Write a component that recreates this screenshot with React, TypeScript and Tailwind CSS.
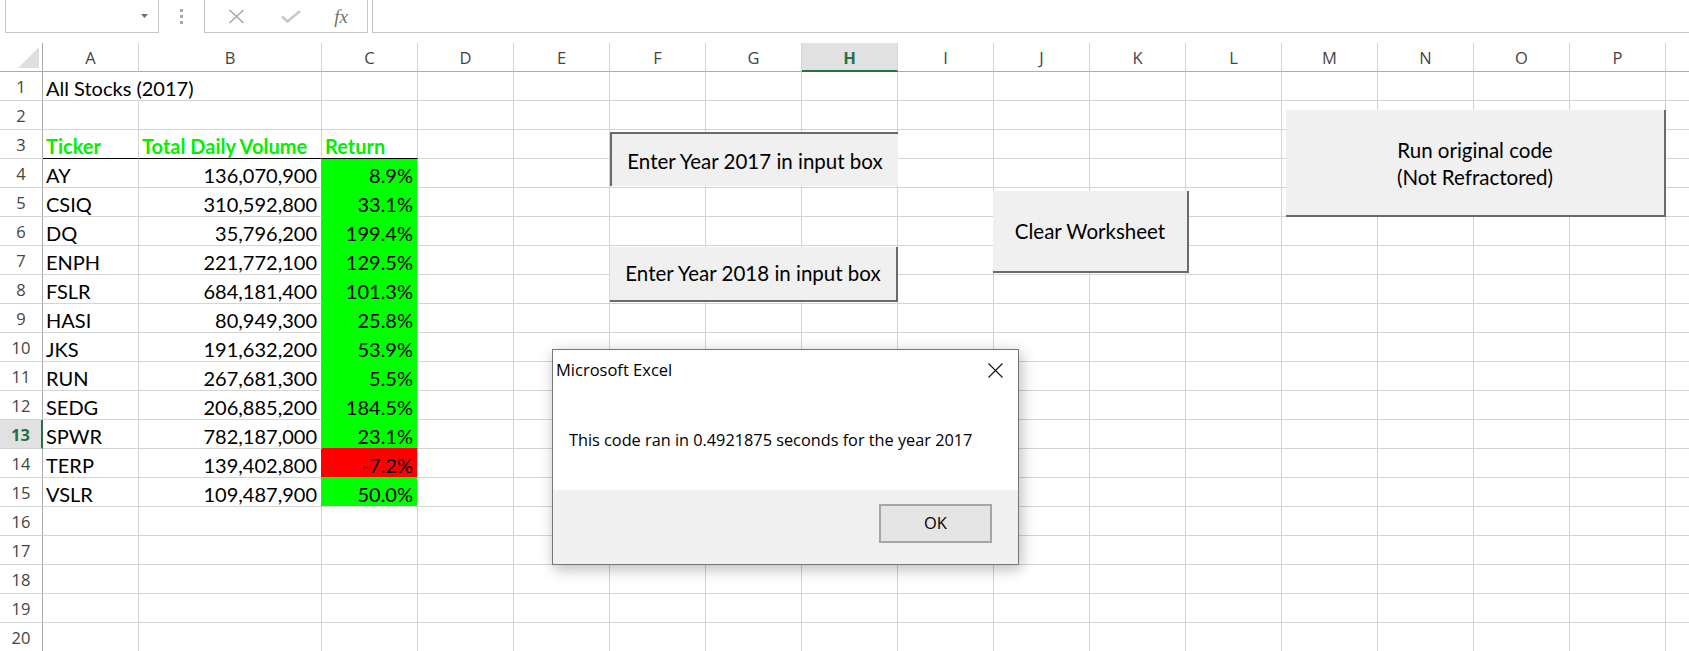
import React from "react";

const COLS = ["A", "B", "C", "D", "E", "F", "G", "H", "I", "J", "K", "L", "M", "N", "O", "P", "Q"];

type Fill = "green" | "red";
type Row = { a?: string; b?: string; c?: string; fill?: Fill };

const DATA: Record<number, Row> = {
  4: { a: "AY", b: "136,070,900", c: "8.9%", fill: "green" },
  5: { a: "CSIQ", b: "310,592,800", c: "33.1%", fill: "green" },
  6: { a: "DQ", b: "35,796,200", c: "199.4%", fill: "green" },
  7: { a: "ENPH", b: "221,772,100", c: "129.5%", fill: "green" },
  8: { a: "FSLR", b: "684,181,400", c: "101.3%", fill: "green" },
  9: { a: "HASI", b: "80,949,300", c: "25.8%", fill: "green" },
  10: { a: "JKS", b: "191,632,200", c: "53.9%", fill: "green" },
  11: { a: "RUN", b: "267,681,300", c: "5.5%", fill: "green" },
  12: { a: "SEDG", b: "206,885,200", c: "184.5%", fill: "green" },
  13: { a: "SPWR", b: "782,187,000", c: "23.1%", fill: "green" },
  14: { a: "TERP", b: "139,402,800", c: "-7.2%", fill: "red" },
  15: { a: "VSLR", b: "109,487,900", c: "50.0%", fill: "green" },
};

const ROWS = Array.from({ length: 20 }, (_, i) => i + 1);

function FormulaBar() {
  return (
    <div className="flex h-[33px] items-stretch">
      {/* Name box */}
      <div className="ml-[5px] flex w-[154px] items-center justify-end border-x border-b border-[#c6c6c6] pr-[10px]">
        <svg width="7" height="4" viewBox="0 0 7 4">
          <path d="M0 0h7L3.5 4z" fill="#6d6d6d" />
        </svg>
      </div>
      <div className="flex w-[45px] flex-col items-center justify-center gap-[3px]">
        <span className="h-[3px] w-[3px] bg-[#a8a8a8]" />
        <span className="h-[3px] w-[3px] bg-[#a8a8a8]" />
        <span className="h-[3px] w-[3px] bg-[#a8a8a8]" />
      </div>
      {/* Cancel / enter / fx */}
      <div className="flex w-[164px] items-center border-x border-b border-[#c6c6c6]">
        <div className="flex w-[62px] justify-center">
          <svg width="17" height="15" viewBox="0 0 17 15">
            <path d="M1.5 1 15.5 14M15.5 1 1.5 14" stroke="#a3a3a3" strokeWidth="1.4" fill="none" />
          </svg>
        </div>
        <div className="flex w-[48px] justify-center">
          <svg width="20" height="13" viewBox="0 0 20 13">
            <path d="M1 6.5 6.5 11.5 19 1" stroke="#c9c9c9" strokeWidth="2.6" fill="none" />
          </svg>
        </div>
        <div className="flex w-[52px] justify-center font-['Liberation_Serif',serif] text-[19px] italic leading-none text-[#707070]">
          fx
        </div>
      </div>
      <div className="ml-[4px] flex-1 border-b border-l border-[#c6c6c6]" />
    </div>
  );
}

function cellText(row: number, col: string) {
  if (row === 1 && col === "A") return "All Stocks (2017)";
  if (row === 3) {
    if (col === "A") return "Ticker";
    if (col === "B") return "Total Daily Volume";
    if (col === "C") return "Return";
  }
  const d = DATA[row];
  if (!d) return "";
  if (col === "A") return d.a ?? "";
  if (col === "B") return d.b ?? "";
  if (col === "C") return d.c ?? "";
  return "";
}

function fillColor(f?: Fill) {
  return f === "red" ? "#ff0000" : "#00ff00";
}

function Cell({ row, col }: { row: number; col: string }) {
  const text = cellText(row, col);
  const d = DATA[row];
  const next = DATA[row + 1];
  let bg: string | undefined;
  let borderR = "#d4d4d4";
  let borderB = "#d4d4d4";

  if (row === 3 && (col === "A" || col === "B" || col === "C")) borderB = "#000000";
  if (row === 1 && col === "A") borderR = "transparent";
  if (d && d.fill && col === "C") {
    bg = fillColor(d.fill);
    borderB = next && next.fill ? fillColor(next.fill) : "#d4d4d4";
  }
  if (d && d.fill && col === "B") borderR = fillColor(d.fill);

  const header = row === 3;
  const right = !header && (col === "B" || col === "C");

  return (
    <div
      className={
        "flex items-center whitespace-nowrap border-r border-b font-['Lato',sans-serif] text-[20px] " +
        (right ? "justify-end pr-[4px] " : "pl-[3px] ") +
        (header ? "font-bold text-[#00f000]" : "text-black")
      }
      style={{ backgroundColor: bg, borderRightColor: borderR, borderBottomColor: borderB }}
    >
      <span className="pt-[3px]">{text}</span>
    </div>
  );
}

export default function App() {
  return (
    <div className="relative h-[651px] w-[1689px] overflow-hidden bg-white">
      <FormulaBar />

      <div className="mt-[10px] grid auto-rows-[29px] grid-cols-[43px_96px_183px_repeat(15,96px)]">
        {/* Corner */}
        <div className="relative border-r border-b border-[#ababab]">
          <svg className="absolute left-[18px] top-[4px]" width="21" height="21" viewBox="0 0 21 21">
            <path d="M21 0V21H0z" fill="#dfdfdf" />
          </svg>
        </div>
        {/* Column headers (Q sits past the window edge, its label is not shown) */}
        {COLS.map((c) => (
          <div
            key={c}
            className={
              "flex items-center justify-center border-r border-r-[#d4d4d4] pt-[3px] font-['Open_Sans',sans-serif] text-[16.5px] " +
              (c === "H"
                ? "border-b-2 border-b-[#217346] bg-[#e1e1e1] font-bold text-[#217346]"
                : "border-b border-b-[#ababab] text-[#444444]")
            }
          >
            {c === "Q" ? "" : c}
          </div>
        ))}

        {ROWS.map((r) => (
          <React.Fragment key={r}>
            <div
              className={
                "flex items-center justify-center border-b border-b-[#d4d4d4] pt-[2px] font-['Open_Sans',sans-serif] text-[16.5px] " +
                (r === 13
                  ? "border-r-2 border-r-[#217346] bg-[#e1e1e1] font-bold text-[#217346]"
                  : "border-r border-r-[#ababab] text-[#444444]")
              }
            >
              {r}
            </div>
            {COLS.map((c) => (
              <Cell key={c} row={r} col={c} />
            ))}
          </React.Fragment>
        ))}
      </div>

      {/* Sheet buttons */}
      <div className="absolute left-[610px] top-[132px] flex h-[54px] w-[288px] items-center justify-center border-l-2 border-t-2 border-[#6a6a6a] bg-[#f0f0f0] pt-[2px] font-['Lato',sans-serif] text-[20.5px] text-black">
        Enter Year 2017 in input box
      </div>
      <div className="absolute left-[610px] top-[247px] flex h-[55px] w-[288px] items-center justify-center border-r-2 border-b-2 border-[#6a6a6a] bg-[#f0f0f0] font-['Lato',sans-serif] text-[20.5px] text-black">
        Enter Year 2018 in input box
      </div>
      <div className="absolute left-[993px] top-[191px] flex h-[82px] w-[196px] items-center justify-center border-r-2 border-b-2 border-[#6a6a6a] bg-[#f0f0f0] font-['Lato',sans-serif] text-[20.5px] text-black">
        Clear Worksheet
      </div>
      <div className="absolute left-[1286px] top-[110px] flex h-[107px] w-[380px] flex-col items-center justify-center border-r-2 border-b-2 border-[#6a6a6a] bg-[#f0f0f0] pt-[3px] text-center font-['Lato',sans-serif] text-[20.5px] leading-[26.6px] text-black">
        <span>Run original code</span>
        <span>(Not Refractored)</span>
      </div>

      {/* Message box */}
      <div className="absolute left-[552px] top-[349px] flex h-[216px] w-[467px] flex-col border border-[#767676] bg-white font-['Open_Sans',sans-serif] text-black shadow-[2px_4px_14px_rgba(0,0,0,0.28)]">
        <div className="flex h-[40px] items-center justify-between">
          <span className="pl-[3px] text-[16.5px]">Microsoft Excel</span>
          <div className="flex h-full w-[46px] items-center justify-center">
            <svg width="15" height="15" viewBox="0 0 15 15">
              <path d="M0.5 0.5 14.5 14.5M14.5 0.5 0.5 14.5" stroke="#111111" strokeWidth="1.1" fill="none" />
            </svg>
          </div>
        </div>
        <div className="flex h-[100px] items-center pl-[16px] text-[16.3px]">
          This code ran in 0.4921875 seconds for the year 2017
        </div>
        <div className="flex flex-1 items-start justify-end bg-[#f0f0f0] pr-[26px] pt-[14px]">
          <div className="flex h-[39px] w-[113px] items-center justify-center border-2 border-[#a6a6a6] bg-[#e5e5e5] text-[16.5px]">
            OK
          </div>
        </div>
      </div>
    </div>
  );
}
